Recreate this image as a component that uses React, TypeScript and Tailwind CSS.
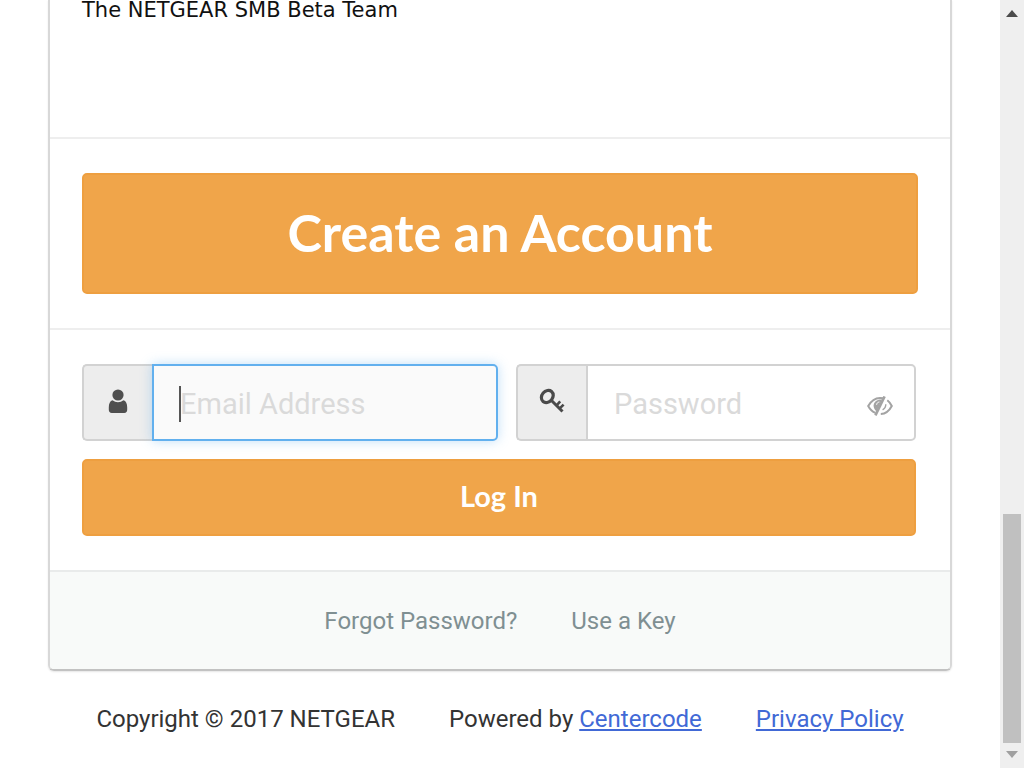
import React from 'react';

function UserIcon() {
  return (
    <svg viewBox="0 0 20 24" className="h-6 w-5" fill="#4f4f4f" aria-hidden="true">
      <circle cx="10" cy="6" r="5.600" />
      <path d="M4.600 11.200C2 11.900.8 14.400.8 18.600v2.200c0 2 1 3.100 3 3.100h12.400c2 0 3-1.100 3-3.100v-2.200c0-4.200-1.200-6.700-3.800-7.400-1.500 1.300-3.300 2-5.400 2s-3.900-.7-5.400-2z" />
    </svg>
  );
}

function KeyIcon() {
  return (
    <svg viewBox="0 0 26 26" className="h-[26px] w-[26px]" fill="none" stroke="#4a4a4a" aria-hidden="true">
      <ellipse cx="8.300" cy="8.500" rx="6.600" ry="5.400" transform="rotate(-50 8.300 8.500)" strokeWidth="3.200" />
      <path d="M12 12L23.500 23.500" strokeWidth="3" />
      <path d="M17.600 17.400L21.200 13.400M21 20.200L24.600 16.600" strokeWidth="2.600" />
    </svg>
  );
}

function HiddenIcon() {
  return (
    <svg viewBox="0 0 26 20" className="h-5 w-[26px]" fill="none" stroke="#a3a3a3" strokeWidth="2" aria-hidden="true">
      <path d="M16 2.200C15 2 14 1.900 13 1.900 8 1.900 4 5 1.200 10c1.800 3.400 4.300 5.700 7.300 6.900" />
      <path d="M17.600.4L8.400 19.400" strokeWidth="2.600" />
      <path d="M15 3.500L9.600 15.500C7.600 14 6.600 12.200 6.600 9.600 6.600 6 10 3.200 15 3.500z" fill="#a3a3a3" stroke="none" />
      <path d="M9.600 8.800C9.800 7 10.800 6.200 12.400 6" stroke="#fff" strokeWidth="1" />
      <path d="M20.300 4.200C22.100 5.500 23.600 7.500 24.800 10c-2.600 4.900-6.200 7.800-11 8" />
      <path d="M18.800 8.200C18.800 10.600 17.600 12.700 15.600 13.800" strokeWidth="1.400" />
    </svg>
  );
}

const addon =
  'flex w-[70px] shrink-0 items-center justify-center rounded-l-[5px] border-2 border-r-0 border-[#d2d2d2] bg-[#ededed] pb-1';
const field =
  'h-[77px] w-full min-w-0 rounded-r-[5px] border-2 pt-0.5 pl-[26px] text-[29px] text-[#333] outline-none placeholder:text-[#dadada] placeholder:opacity-100';
const action =
  "w-full rounded-[5px] border-2 border-[#ee9f40] bg-[#f0a54a] pb-1 font-['Lato',sans-serif] leading-none font-bold text-white";

export default function App() {
  return (
    <div className="flex min-h-screen bg-white font-['Roboto',sans-serif] text-2xl">
      <div className="min-w-0 flex-1">
        <main className="mx-12 rounded-b-[6px] border-x-2 border-b-2 border-[#d8d8d8] border-b-[#c2c2c2] shadow-[0_1px_2px_rgba(0,0,0,0.1)]">
          <section className="border-b-2 border-[#eeeeee] px-8 pb-[117px]">
            <p className="font-['DejaVu_Sans',sans-serif] text-[21px] leading-5 text-[#111]">The NETGEAR SMB Beta Team</p>
          </section>
          <section className="border-b-2 border-[#eeeeee] px-8 py-[34px]">
            <button type="button" className={`${action} h-[121px] text-[52px]`}>
              Create an Account
            </button>
          </section>
          <form className="py-[34px] pr-[34px] pl-8" onSubmit={(event) => event.preventDefault()}>
            <div className="grid grid-cols-[416fr_400fr] gap-[18px]">
              <div className="flex">
                <label htmlFor="email" aria-label="Email Address" className={addon}>
                  <UserIcon />
                </label>
                <div className="relative min-w-0 flex-1">
                  <input
                    id="email"
                    type="email"
                    placeholder="Email Address"
                    className={`${field} border-[#62b0ee] bg-[#fafafa] caret-transparent shadow-[0_0_12px_rgba(98,176,238,0.4)]`}
                  />
                  <span className="absolute top-[22px] left-[27px] h-9 w-0.5 bg-[#555]" />
                </div>
              </div>
              <div className="flex">
                <label htmlFor="password" aria-label="Password" className={addon}>
                  <KeyIcon />
                </label>
                <div className="relative min-w-0 flex-1">
                  <input
                    id="password"
                    type="password"
                    placeholder="Password"
                    className={`${field} border-[#d2d2d2] bg-white pr-16`}
                  />
                  <button type="button" aria-label="Show password" className="absolute top-8 right-[23px]">
                    <HiddenIcon />
                  </button>
                </div>
              </div>
            </div>
            <button type="submit" className={`${action} mt-[18px] h-[77px] text-[29px]`}>
              Log In
            </button>
          </form>
          <nav className="flex h-[99px] items-center justify-center gap-[54px] rounded-b-[4px] border-t-2 border-[#e9ebeb] bg-[#f8faf9] text-[#7f8f92]">
            <a href="#forgot">Forgot Password?</a>
            <a href="#key">Use a Key</a>
          </nav>
        </main>
        <footer className="flex justify-center gap-[54px] pt-8 text-[#333]">
          <span>Copyright © 2017 NETGEAR</span>
          <span>
            Powered by{' '}
            <a href="#centercode" className="text-[#4169d6] underline">
              Centercode
            </a>
          </span>
          <a href="#privacy" className="text-[#4169d6] underline">
            Privacy Policy
          </a>
        </footer>
      </div>
      <div className="flex w-6 flex-col items-center bg-[#efefef]" aria-hidden="true">
        <svg viewBox="0 0 12 7" className="mt-2.5 h-[7px] w-3" fill="#4b4b4b">
          <path d="M6 0l6 7H0z" />
        </svg>
        <div className="flex-1" />
        <div className="h-[229px] w-[18px] bg-[#c0c0c0]" />
        <svg viewBox="0 0 12 7" className="mt-2 mb-2.5 h-[7px] w-3" fill="#a0a0a0">
          <path d="M6 7L0 0h12z" />
        </svg>
      </div>
    </div>
  );
}
